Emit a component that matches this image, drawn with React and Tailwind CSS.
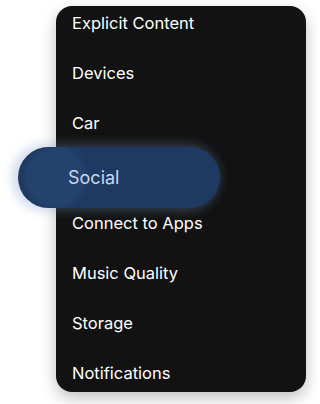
import React from 'react'

const items = ['Explicit Content', 'Devices', 'Car', 'Social', 'Connect to Apps', 'Music Quality', 'Storage', 'Notifications']

const App = () => {
  return (
    <div className="w-[317px] h-[404px] bg-white overflow-hidden" style={{ fontFamily: 'Inter, "Noto Sans", sans-serif' }}>
      <div className="ml-[56px] mt-[6px] w-[250px] h-[386px] rounded-[16px] bg-[#121212] shadow-[0_6px_16px_rgba(0,0,0,0.25)] pt-[5px] pl-[16px] flex flex-col gap-[26px]">
        {items.map((label) =>
          label === 'Social' ? (
            <div key={label} className="relative h-[24px]">
              <div className="absolute left-[-54px] top-[-14px] w-[202px] h-[61px] rounded-full bg-[#1f3a62] shadow-[-3px_0_10px_4px_rgba(120,150,200,0.3)] flex items-center overflow-hidden">
                <div className="absolute left-[10px] top-[3px] w-[55px] h-[55px] rounded-full bg-[#24426d] shadow-[0_0_8px_rgba(60,100,160,0.5)]" />
                <span className="relative ml-[50px] text-[18px] text-[#c9d7ec]">Social</span>
              </div>
            </div>
          ) : (
            <div key={label} className="h-[24px] flex items-center text-[16.5px] text-white">
              {label}
            </div>
          )
        )}
      </div>
    </div>
  )
}

export default App
